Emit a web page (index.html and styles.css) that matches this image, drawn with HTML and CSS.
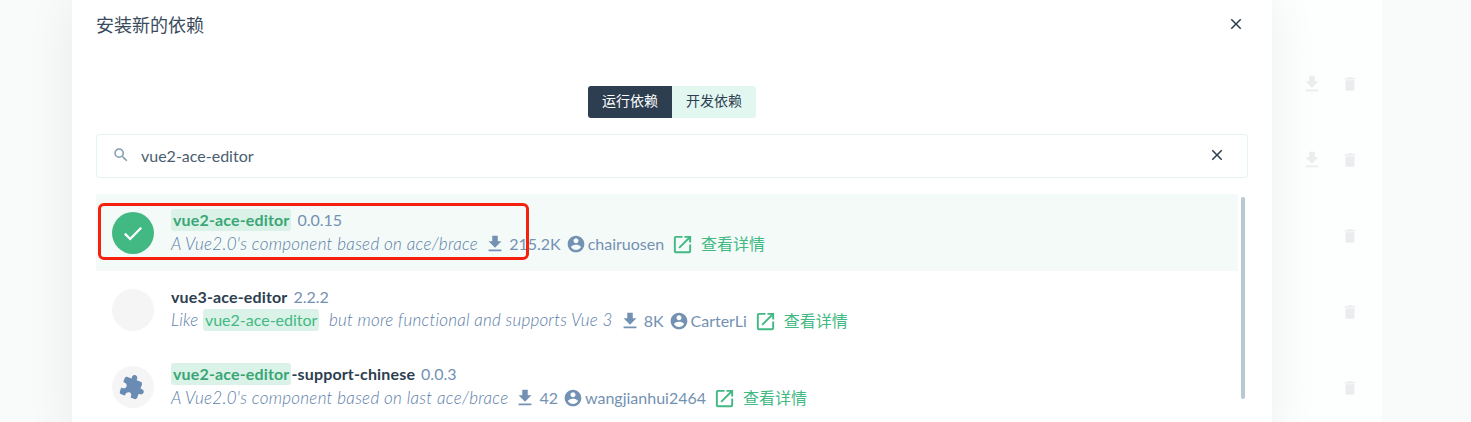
FILE: index.html
```html
<!DOCTYPE html>
<html lang="zh-CN">
<head>
    <meta charset="UTF-8">
    <meta name="viewport" content="width=device-width, initial-scale=1.0">
    <title>安装新的依赖</title>
    <link rel="stylesheet" href="styles.css">
</head>
<body>
    <svg class="sprite" aria-hidden="true">
        <symbol id="i-download" viewBox="0 0 24 24"><path d="M5 20h14v-2H5v2zM19 9h-4V3H9v6H5l7 7 7-7z"/></symbol>
        <symbol id="i-trash" viewBox="0 0 24 24"><path d="M6 19c0 1.1.9 2 2 2h8c1.1 0 2-.9 2-2V7H6v12zM19 4h-3.5l-1-1h-5l-1 1H5v2h14V4z"/></symbol>
        <symbol id="i-user" viewBox="0 0 24 24"><path d="M12 2C6.48 2 2 6.48 2 12s4.48 10 10 10 10-4.48 10-10S17.52 2 12 2zm0 3c1.66 0 3 1.34 3 3s-1.34 3-3 3-3-1.34-3-3 1.34-3 3-3zm0 14.2c-2.5 0-4.71-1.28-6-3.22.03-1.99 4-3.08 6-3.08 1.99 0 5.97 1.09 6 3.08-1.29 1.94-3.5 3.22-6 3.22z"/></symbol>
        <symbol id="i-open" viewBox="0 0 24 24"><path d="M19 19H5V5h7V3H5a2 2 0 0 0-2 2v14a2 2 0 0 0 2 2h14c1.1 0 2-.9 2-2v-7h-2v7zM14 3v2h3.59l-9.83 9.83 1.41 1.41L19 6.41V10h2V3h-7z"/></symbol>
        <symbol id="i-close" viewBox="0 0 24 24"><path d="M19 6.41 17.59 5 12 10.59 6.41 5 5 6.41 10.59 12 5 17.59 6.41 19 12 13.41 17.59 19 19 17.59 13.41 12z"/></symbol>
        <symbol id="i-search" viewBox="0 0 24 24"><path d="M15.5 14h-.79l-.28-.27A6.47 6.47 0 0 0 16 9.5 6.5 6.5 0 1 0 9.5 16c1.61 0 3.09-.59 4.23-1.57l.27.28v.79l5 4.99L20.49 19l-4.99-5zm-6 0C7.01 14 5 11.99 5 9.5S7.01 5 9.5 5 14 7.01 14 9.5 11.99 14 9.5 14z"/></symbol>
        <symbol id="i-puzzle" viewBox="0 0 24 24"><path d="M20.5 11H19V7c0-1.1-.9-2-2-2h-4V3.5C13 2.12 11.88 1 10.5 1S8 2.12 8 3.5V5H4c-1.1 0-1.99.9-1.99 2v3.8H3.5c1.49 0 2.7 1.21 2.7 2.7s-1.21 2.7-2.7 2.7H2V20c0 1.1.9 2 2 2h3.8v-1.5c0-1.49 1.21-2.7 2.7-2.7 1.49 0 2.7 1.21 2.7 2.7V22H17c1.1 0 2-.9 2-2v-4h1.5c1.38 0 2.5-1.12 2.5-2.5S21.88 11 20.5 11z"/></symbol>
    </svg>

    <div class="page">
        <div class="modal">
            <div class="modal-header">
                <h1>安装新的依赖</h1>
                <svg class="icon close-icon"><use href="#i-close"/></svg>
            </div>

            <div class="tabs">
                <div class="tab active">运行依赖</div>
                <div class="tab">开发依赖</div>
            </div>

            <div class="search">
                <svg class="icon search-icon"><use href="#i-search"/></svg>
                <span class="search-value">vue2-ace-editor</span>
                <svg class="icon close-icon"><use href="#i-close"/></svg>
            </div>

            <div class="results">
                <div class="list">
                    <div class="row selected">
                        <div class="avatar checked">
                            <svg class="check" viewBox="0 0 24 24"><path d="M5 12.5l4.6 4.6L19 7.5"/></svg>
                        </div>
                        <div class="info">
                            <div class="name-line">
                                <span class="name"><mark>vue2-ace-editor</mark></span>
                                <span class="version">0.0.15</span>
                            </div>
                            <div class="desc-line">
                                <em>A Vue2.0's component based on ace/brace</em>
                                <svg class="icon meta-icon dl"><use href="#i-download"/></svg>
                                <span>215.2K</span>
                                <svg class="icon meta-icon user"><use href="#i-user"/></svg>
                                <span>chairuosen</span>
                                <svg class="icon link-icon"><use href="#i-open"/></svg>
                                <span class="link">查看详情</span>
                            </div>
                        </div>
                    </div>

                    <div class="row">
                        <div class="avatar"></div>
                        <div class="info">
                            <div class="name-line">
                                <span class="name">vue3-ace-editor</span>
                                <span class="version">2.2.2</span>
                            </div>
                            <div class="desc-line">
                                <em class="tight">Like <mark>vue2-ace-editor</mark> but more functional and supports Vue 3</em>
                                <svg class="icon meta-icon dl"><use href="#i-download"/></svg>
                                <span>8K</span>
                                <svg class="icon meta-icon user"><use href="#i-user"/></svg>
                                <span>CarterLi</span>
                                <svg class="icon link-icon"><use href="#i-open"/></svg>
                                <span class="link">查看详情</span>
                            </div>
                        </div>
                    </div>

                    <div class="row">
                        <div class="avatar">
                            <svg class="icon puzzle"><use href="#i-puzzle"/></svg>
                        </div>
                        <div class="info">
                            <div class="name-line">
                                <span class="name"><mark>vue2-ace-editor</mark>-support-chinese</span>
                                <span class="version">0.0.3</span>
                            </div>
                            <div class="desc-line">
                                <em>A Vue2.0's component based on last ace/brace</em>
                                <svg class="icon meta-icon dl"><use href="#i-download"/></svg>
                                <span>42</span>
                                <svg class="icon meta-icon user"><use href="#i-user"/></svg>
                                <span>wangjianhui2464</span>
                                <svg class="icon link-icon"><use href="#i-open"/></svg>
                                <span class="link">查看详情</span>
                            </div>
                        </div>
                    </div>
                </div>
                <div class="scrollbar"></div>
            </div>
        </div>

        <div class="behind">
            <div class="behind-row">
                <svg class="icon faint dl-faint"><use href="#i-download"/></svg>
                <svg class="icon faint"><use href="#i-trash"/></svg>
            </div>
            <div class="behind-row">
                <svg class="icon faint dl-faint"><use href="#i-download"/></svg>
                <svg class="icon faint"><use href="#i-trash"/></svg>
            </div>
            <div class="behind-row">
                <svg class="icon faint"><use href="#i-trash"/></svg>
            </div>
            <div class="behind-row">
                <svg class="icon faint"><use href="#i-trash"/></svg>
            </div>
            <div class="behind-row">
                <svg class="icon faint"><use href="#i-trash"/></svg>
            </div>
        </div>

        <div class="annotation"></div>
    </div>
</body>
</html>
```

FILE: styles.css
```css
* {
    margin: 0;
    padding: 0;
    box-sizing: border-box;
}

html, body {
    height: 422px;
    overflow: hidden;
}

body {
    font-family: Lato, "Noto Sans CJK SC", sans-serif;
    font-size: 16px;
    color: #2c3e50;
    background: #f8fbfa;
}

.sprite {
    display: none;
}

.icon {
    width: 18px;
    height: 18px;
    fill: currentColor;
    flex-shrink: 0;
}

.page {
    position: relative;
    display: flex;
    height: 422px;
    padding-left: 72px;
}

/* modal */
.modal {
    position: relative;
    z-index: 1;
    width: 1200px;
    height: 440px;
    padding: 0 24px;
    background: #fff;
    box-shadow: 0 0 48px rgba(0, 0, 0, 0.07);
}

.modal-header {
    display: flex;
    align-items: center;
    justify-content: space-between;
    height: 48px;
    padding-right: 3px;
}

.modal-header h1 {
    font-size: 18px;
    font-weight: 400;
    color: #3a4b5c;
}

.tabs {
    display: flex;
    justify-content: center;
    margin-top: 38px;
}

.tab {
    width: 84px;
    height: 32px;
    line-height: 30px;
    text-align: center;
    font-size: 14px;
    background: #e2f7f0;
    border-radius: 0 3px 3px 0;
}

.tab.active {
    background: #2c3e50;
    color: #fff;
    border-radius: 3px 0 0 3px;
}

.search {
    display: flex;
    align-items: center;
    height: 44px;
    margin-top: 16px;
    padding: 0 21px 2px 15px;
    border: 1px solid #e2f5ef;
    border-radius: 3px;
}

.search-icon {
    color: #7f9db0;
}

.search-value {
    flex: 1;
    margin-left: 11px;
    font-size: 16px;
    color: #4a5d70;
}

/* result rows */
.results {
    display: flex;
    margin-top: 16px;
}

.list {
    width: 1142px;
}

.row {
    display: flex;
    align-items: center;
    height: 77px;
    padding-left: 16px;
}

.row.selected {
    background: #f4faf8;
}

.avatar {
    display: flex;
    align-items: center;
    justify-content: center;
    width: 42px;
    height: 42px;
    margin-right: 17px;
    border-radius: 50%;
    background: #f5f5f5;
}

.avatar.checked {
    background: #42b983;
}

.check {
    width: 28px;
    height: 28px;
    fill: none;
    stroke: #fff;
    stroke-width: 2;
}

.puzzle {
    width: 26px;
    height: 26px;
    color: #6a8bb3;
    transform: rotate(20deg);
}

.info {
    margin-bottom: 3px;
}

.name-line {
    display: flex;
    align-items: center;
    height: 24px;
    font-size: 16px;
}

.name {
    font-weight: 700;
    letter-spacing: 0.15px;
}

.version {
    margin-left: 6px;
    color: #7391b2;
}

mark {
    display: inline-block;
    padding: 0 2px;
    line-height: 22px;
    color: #3aa675;
    background: #dbf2e8;
    border-radius: 3px;
}

.desc-line {
    display: flex;
    align-items: center;
    height: 23px;
    color: #7391b2;
    font-size: 16px;
    white-space: pre;
}

.desc-line em {
    font-size: 17px;
    font-weight: 300;
    letter-spacing: 0.3px;
    color: #5b7ea8;
}

.desc-line em.tight {
    letter-spacing: 0.23px;
}

.desc-line em mark {
    font-size: 16px;
    font-style: normal;
    font-weight: 400;
    letter-spacing: 0;
    margin-right: 5px;
    color: #42b983;
}

.dl {
    width: 22px;
    height: 22px;
    margin: 2px 3px 0 6px;
}

.user {
    width: 20px;
    height: 20px;
    margin: 2px 2px 0 5px;
}

.link-icon {
    width: 23px;
    height: 23px;
    margin: 2px 7px 0 7px;
    color: #42b983;
}

.link {
    color: #42b983;
    font-size: 16px;
}

.scrollbar {
    width: 4px;
    height: 202px;
    margin: 3px 0 0 3px;
    border-radius: 2px;
    background: #b8c9d1;
}

/* faded page behind the modal */
.behind {
    width: 110px;
    height: 100%;
    padding-top: 46px;
    background: #fdfefe;
}

.behind-row {
    display: flex;
    justify-content: flex-end;
    gap: 18px;
    align-items: center;
    height: 76px;
    padding-right: 23px;
}

.faint {
    color: #ebecee;
}

.dl-faint {
    width: 22px;
    height: 22px;
}

/* red box drawn over the screenshot */
.annotation {
    position: absolute;
    z-index: 2;
    left: 98px;
    top: 203px;
    width: 431px;
    height: 57px;
    border: 3px solid #f5210e;
    border-radius: 6px;
}
```
